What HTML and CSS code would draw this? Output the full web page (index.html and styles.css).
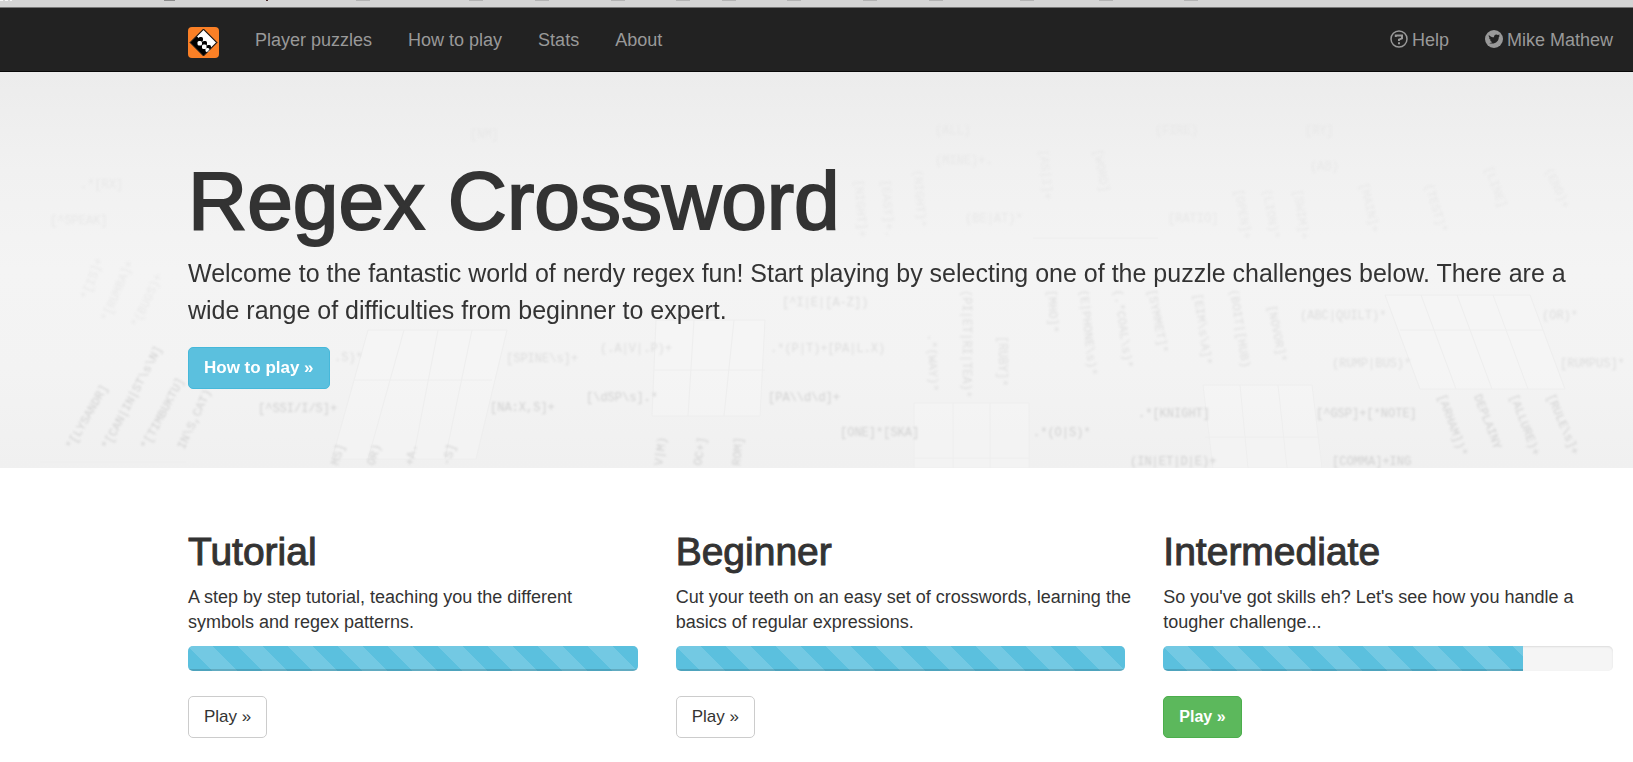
FILE: index.html
```html
<!DOCTYPE html>
<html lang="en">
<head>
<meta charset="utf-8">
<meta name="viewport" content="width=device-width, initial-scale=1">
<title>Regex Crossword</title>
<link rel="stylesheet" href="styles.css">
</head>
<body>
<div class="strip" aria-hidden="true">
  <svg width="100%" height="7">
    <g fill="#f8f8f8"><rect x="0" y="0" width="3" height="1"/><rect x="5" y="0" width="3" height="1"/><rect x="10" y="0" width="2" height="1"/></g>
    <g fill="#8b8b8b"><rect x="164" y="0" width="11" height="1"/></g>
    <rect x="266" y="0" width="2" height="1" fill="#4a2626"/>
    <g fill="#b3b3b3"><rect x="356" y="0" width="14" height="1"/><rect x="469" y="0" width="14" height="1"/><rect x="535" y="0" width="14" height="1"/><rect x="611" y="0" width="14" height="1"/><rect x="676" y="0" width="14" height="1"/><rect x="722" y="0" width="14" height="1"/><rect x="787" y="0" width="14" height="1"/><rect x="863" y="0" width="14" height="1"/><rect x="929" y="0" width="14" height="1"/><rect x="1020" y="0" width="14" height="1"/><rect x="1099" y="0" width="14" height="1"/><rect x="1184" y="0" width="14" height="1"/></g>
  </svg>
</div>

<nav class="navbar">
  <a class="brand" href="#" aria-label="Regex Crossword home">
    <svg width="31" height="31" viewBox="0 0 31 31">
      <rect width="31" height="31" rx="4" fill="#fb8026"/>
      <path d="M15.500 2 29 15.500 15.500 29 2 15.500Z" fill="#000"/>
      <path d="M15.500 3 28 15.500 22 21.500 9 9.500Z" fill="#fff"/>
      <g fill="#000"><rect x="10.500" y="10" width="4.500" height="4.500" rx="1.500"/><rect x="14.500" y="14" width="4.500" height="4.500" rx="1.500"/><rect x="18.500" y="18" width="4.500" height="4" rx="1.500"/></g>
      <g fill="#fff"><rect x="9.500" y="14" width="4.500" height="4.500" rx="1.500"/><rect x="14" y="17.500" width="4.500" height="4.500" rx="1.500"/><rect x="17.500" y="21" width="4" height="4" rx="1.500"/></g>
      <path d="M15.500 2 29 15.500 15.500 29 2 15.500Z" fill="none" stroke="#222"/>
    </svg>
  </a>
  <a class="nav-link" href="#">Player puzzles</a>
  <a class="nav-link" href="#">How to play</a>
  <a class="nav-link" href="#">Stats</a>
  <a class="nav-link" href="#">About</a>
  <a class="nav-link nav-end" href="#">
    <svg width="18" height="18" viewBox="0 0 18 18" fill="none" stroke="#999"><circle cx="9" cy="9" r="8" stroke-width="1.500"/><path d="M5.800 7V5.500H12V8.300L9 9.600V11" stroke-width="2"/><path d="M9 12.300V14.300" stroke-width="2"/></svg>
    Help</a>
  <a class="nav-link" href="#">
    <svg width="18" height="18" viewBox="0 0 18 18"><circle cx="9" cy="9" r="9" fill="#999"/><path d="M3.800 5C5.200 6.500 7 7.300 9 7.300 8.700 4.500 11.500 3.700 12.900 5.100L14.700 4.500 13.900 5.900 15 5.800 13.800 7C14 11.500 9.500 15 4 12.900 5.500 12.900 6.500 12.600 7.300 11.900 6 11.700 5.300 11 5 10.200H6C4.800 9.600 4.100 8.700 4.100 7.600L5 7.800C3.900 7 3.500 6 3.800 5Z" fill="#222"/></svg>
    Mike Mathew</a>
</nav>

<header class="hero">
  <svg class="hero-art" viewBox="0 2 1633 396" preserveAspectRatio="xMidYMax slice" aria-hidden="true">
    <g class="grids">
      <path d="M368 260H507L476 389H332ZM354 310H492M404 260 368 389M438 260 413 389M472 260 445 389"/>
      <path d="M656 250H765L760 346H652ZM654 300H765M694 250 688 346M734 250 724 346"/>
      <path d="M914 333H1029V398H914ZM953 333V398M990 333V398M914 388H1029"/>
      <path d="M1203 315H1312L1322 398H1213ZM1205 367H1319M1240 315 1248 398M1278 315 1287 398"/>
      <path d="M1385 225H1530L1565 319H1420ZM1400 260H1543M1421 225 1456 319M1457 225 1492 319M1493 225 1528 319"/>
      <path d="M1033 168H1158"/>
      <path d="M40 392H186"/>
    </g>
    <g class="clues clues-far">
      <text x="80" y="118">.*[RX]</text><text x="470" y="68">[NM]</text><text x="935" y="64">(ALL)</text><text x="1155" y="64">(FIRE)</text><text x="1305" y="64">[RY]</text><text x="935" y="94">(MINE)+.</text><text x="1310" y="100">(AB)</text><text x="965" y="152">(BE|AT)*</text><text x="1168" y="152">[RATIO]</text><text x="50" y="154">[^SPEAK]</text>
      <text transform="translate(855 110) rotate(86)">[NIGHT]+</text><text transform="translate(882 110) rotate(86)">[EAST]+.</text><text transform="translate(914 100) rotate(86)">(NIGHT)*</text><text transform="translate(1040 80) rotate(85)">[AS|I]+</text><text transform="translate(1094 80) rotate(80)">[WORD]</text><text transform="translate(1235 120) rotate(80)">[OPEN]+</text><text transform="translate(1263 120) rotate(80)">(LION)*</text><text transform="translate(1294 120) rotate(82)">[SWIM]+</text><text transform="translate(1360 114) rotate(76)">[MAIN]+</text><text transform="translate(1425 115) rotate(73)">(TEST)*</text><text transform="translate(1485 98) rotate(70)">[LINE]</text><text transform="translate(1545 100) rotate(65)">(END)+</text>
      <text transform="translate(88 230) rotate(-70)">*[IS]+</text><text transform="translate(108 252) rotate(-67)">*[RUMBA]+</text><text transform="translate(138 258) rotate(-65)">*(BUGS)+</text>
    </g>
    <g class="clues clues-mid">
      <text x="782" y="236">[^I|E|[A-Z])</text><text x="334" y="291">.S)*</text><text x="506" y="292">[SPINE\s]+</text><text x="600" y="282">(.A|V|.P)+</text><text x="770" y="282">.*(P|T)+[PA|L.X)</text><text x="1300" y="249">(ABC|QUILT)*</text><text x="1542" y="249">(OR)*</text><text x="1332" y="297">(RUMP|BUS)*</text><text x="1560" y="297">[RUMPUS]*</text>
      <text transform="translate(963 220) rotate(90)">(PI|ET|RI|TEA)*</text><text transform="translate(928 264) rotate(88)">.*(WAY)*</text><text transform="translate(999 266) rotate(90)">[RUBY]*</text><text transform="translate(1048 220) rotate(87)">[MHO]*</text><text transform="translate(1080 220) rotate(84)">(E|PHONE\s)*</text><text transform="translate(1114 220) rotate(82)">(.*COAL\s)*</text><text transform="translate(1148 220) rotate(79)">[SYMMET]*</text><text transform="translate(1194 224) rotate(82)">[EIM\s\A]*</text><text transform="translate(1230 220) rotate(81)">(BOIT|[HUB)</text><text transform="translate(1268 236) rotate(79)">[NOVOR]*</text>
    </g>
    <g class="clues">
      <text x="258" y="342">[^SSI/I/S]+</text><text x="490" y="341">[NA:X,S]+</text><text x="586" y="331">[\dSP\s].*</text><text x="768" y="331">[PA\\d\d]+</text><text x="840" y="366">[ONE]*[SKA]</text><text x="1033" y="366">.*(O|S)*</text><text x="1138" y="347">.*[KNIGHT]</text><text x="1316" y="347">[^GSP]+[*NOTE]</text><text x="1130" y="395">(IN|ET|D|E)+</text><text x="1332" y="395">[COMMA]+ING</text>
      <text transform="translate(72 380) rotate(-60)">*[LYSANDR]</text><text transform="translate(108 380) rotate(-62)">*[CAN|IN|ST\s\N]</text><text transform="translate(147 380) rotate(-62)">*[TIMBUKTU]</text><text transform="translate(184 380) rotate(-65)">IN\S,CAT)</text><text transform="translate(338 396) rotate(-72)">MS]</text><text transform="translate(374 396) rotate(-72)">OR)</text><text transform="translate(413 396) rotate(-80)">+A.</text><text transform="translate(449 396) rotate(-72)">-S]</text><text transform="translate(662 396) rotate(-82)">V|M)</text><text transform="translate(701 396) rotate(-80)">OC+]</text><text transform="translate(740 396) rotate(-85)">ROM]</text>
      <text transform="translate(1438 326) rotate(70)">[ARHAM])*</text><text transform="translate(1474 326) rotate(69)">DEPLAINY</text><text transform="translate(1510 326) rotate(69)">[ALLURE)+</text><text transform="translate(1547 326) rotate(67)">[RULE\s]+</text>
    </g>
  </svg>
  <div class="hero-body">
    <h1>Regex Crossword</h1>
    <p class="lead">Welcome to the fantastic world of nerdy regex fun! Start playing by selecting one of the puzzle challenges below. There are a<br>wide range of difficulties from beginner to expert.</p>
    <a class="btn btn-info" href="#">How to play »</a>
  </div>
</header>

<main class="levels">
  <section class="level">
    <h2>Tutorial</h2>
    <p>A step by step tutorial, teaching you the different<br>symbols and regex patterns.</p>
    <div class="progress" role="progressbar" aria-label="Tutorial progress" aria-valuenow="100"><div class="bar" style="width:100%"></div></div>
    <a class="btn" href="#">Play »</a>
  </section>
  <section class="level">
    <h2>Beginner</h2>
    <p>Cut your teeth on an easy set of crosswords, learning the<br>basics of regular expressions.</p>
    <div class="progress" role="progressbar" aria-label="Beginner progress" aria-valuenow="100"><div class="bar" style="width:100%"></div></div>
    <a class="btn" href="#">Play »</a>
  </section>
  <section class="level">
    <h2>Intermediate</h2>
    <p>So you've got skills eh? Let's see how you handle a<br>tougher challenge...</p>
    <div class="progress" role="progressbar" aria-label="Intermediate progress" aria-valuenow="80"><div class="bar" style="width:80%"></div></div>
    <a class="btn btn-success" href="#">Play »</a>
  </section>
</main>
</body>
</html>
```
FILE: styles.css
```css
* { box-sizing: border-box; }

body {
  margin: 0;
  background: #fff;
  color: #333;
  font: 18px/25px "Liberation Sans", Arial, sans-serif;
}

h1, h2, p { margin: 0; }
a { text-decoration: none; }

.strip {
  height: 8px;
  background: #d4d4d4;
  border-bottom: 1px solid #777;
}
.strip svg { display: block; }

.navbar {
  display: flex;
  align-items: flex-start;
  gap: 36px;
  height: 64px;
  padding: 19px 20px 0 188px;
  background: #222;
  border-bottom: 1px solid #080808;
}
.brand svg { display: block; }
.nav-link {
  display: flex;
  align-items: center;
  gap: 4px;
  color: #999;
  line-height: 27px;
}
.nav-link svg { margin-bottom: 4px; }
.nav-end { margin-left: auto; }

.hero {
  position: relative;
  overflow: hidden;
  padding: 86px 20px 79px 188px;
  background: linear-gradient(#ececec, #f1f1f1 25%, #f4f4f4 50%, #f3f3f3 75%, #f0f0f0);
}
.hero-art {
  position: absolute;
  inset: 0;
  width: 100%;
  height: 100%;
}
.grids {
  fill: #f7f7f7;
  fill-opacity: 0.4;
  stroke: #eee;
  stroke-width: 1;
}
.clues {
  fill: #d2d2d2;
  font-family: "Liberation Mono", monospace;
  font-size: 12px;
  filter: blur(1px);
}
.clues-mid { fill: #dedede; }
.clues-far { fill: #e8e8e8; }

.hero-body { position: relative; }

h1 {
  font-size: 82px;
  font-weight: 400;
  line-height: 86px;
  -webkit-text-stroke: 2px #333;
}
.lead {
  margin: 11px 0 18px;
  font-size: 25px;
  line-height: 37px;
}

.btn {
  display: inline-block;
  padding: 8px 15px;
  border: 1px solid #ccc;
  border-radius: 5px;
  background: #fff;
  color: #333;
  font-size: 17px;
  line-height: 24px;
}
.btn-info {
  background: #5bc0de;
  border-color: #46b8da;
  color: #fff;
  font-weight: 700;
}
.btn-success {
  background: #5cb85c;
  border-color: #4cae4c;
  color: #fff;
  font-size: 16px;
  font-weight: 700;
}

.levels {
  display: grid;
  grid-template-columns: repeat(3, minmax(0, 1fr));
  gap: 38px;
  padding: 63px 20px 24px 188px;
}
.level p { margin-right: -8px; }
h2 {
  margin-bottom: 12px;
  font-size: 39px;
  font-weight: 400;
  line-height: 42px;
  -webkit-text-stroke: 1px #333;
}
.progress {
  height: 25px;
  margin: 11px 0 25px;
  overflow: hidden;
  border-radius: 5px;
  background: #f5f5f5;
  box-shadow: inset 0 1px 2px rgba(0, 0, 0, 0.1);
}
.bar {
  height: 100%;
  background-color: #5bc0de;
  background-image: linear-gradient(45deg, rgba(255, 255, 255, 0.15) 25%, transparent 25%, transparent 50%, rgba(255, 255, 255, 0.15) 50%, rgba(255, 255, 255, 0.15) 75%, transparent 75%);
  background-size: 50px 50px;
  box-shadow: inset 0 -2px 0 rgba(0, 0, 0, 0.15);
}
```
